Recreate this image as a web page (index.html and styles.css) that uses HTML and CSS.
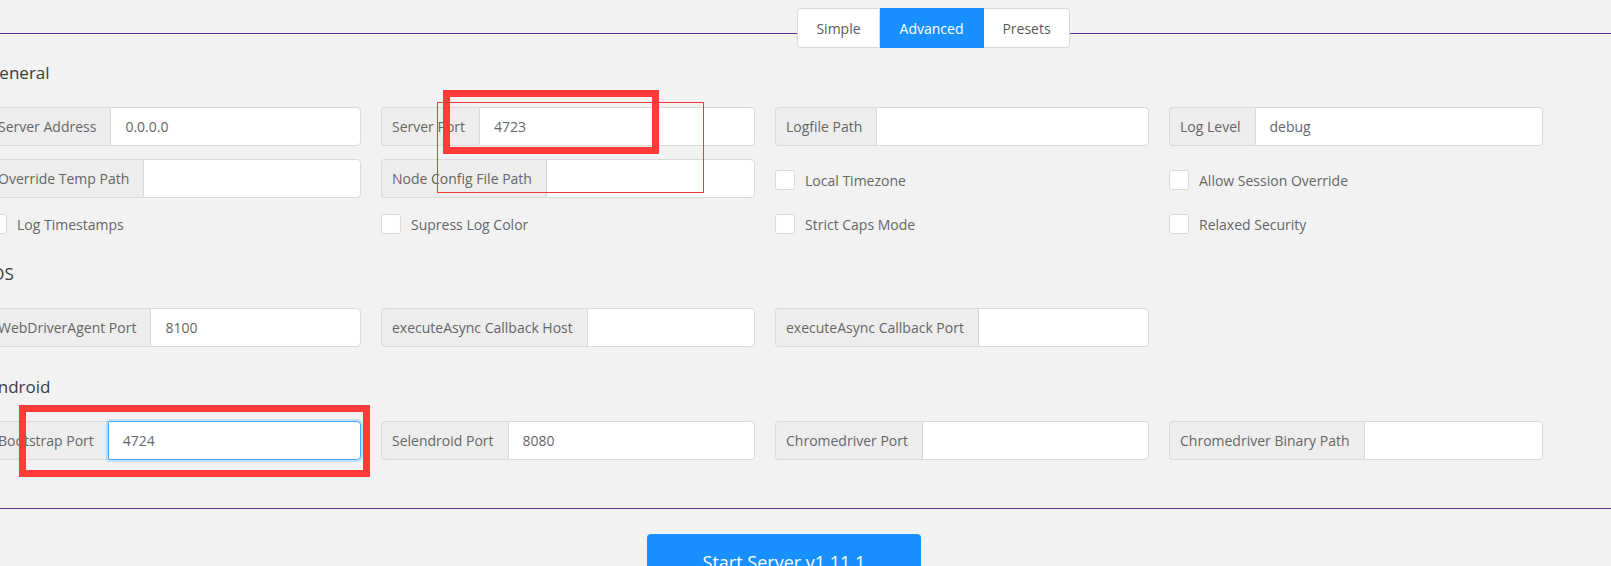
FILE: index.html
```html
<!DOCTYPE html>
<html lang="en">
<head>
<meta charset="utf-8">
<title>Server Settings</title>
<link rel="stylesheet" href="styles.css">
</head>
<body>
  <header class="topbar">
    <div class="tabs">
      <button class="tab tab-simple">Simple</button>
      <button class="tab tab-advanced is-active">Advanced</button>
      <button class="tab tab-presets">Presets</button>
    </div>
  </header>

  <main class="content">
    <section class="section">
      <h2 class="section-title">General</h2>
      <div class="grid">
        <div class="field"><span class="addon">Server Address</span><input class="input" value="0.0.0.0" readonly></div>
        <div class="field"><span class="addon">Server Port</span><input class="input" value="4723" readonly></div>
        <div class="field"><span class="addon">Logfile Path</span><input class="input" value="" readonly></div>
        <div class="field"><span class="addon">Log Level</span><input class="input" value="debug" readonly></div>

        <div class="field"><span class="addon">Override Temp Path</span><input class="input" value="" readonly></div>
        <div class="field"><span class="addon">Node Config File Path</span><input class="input" value="" readonly></div>
        <label class="check"><span class="box"></span>Local Timezone</label>
        <label class="check"><span class="box"></span>Allow Session Override</label>

        <label class="check"><span class="box"></span>Log Timestamps</label>
        <label class="check"><span class="box"></span>Supress Log Color</label>
        <label class="check"><span class="box"></span>Strict Caps Mode</label>
        <label class="check"><span class="box"></span>Relaxed Security</label>
      </div>
    </section>

    <section class="section">
      <h2 class="section-title">iOS</h2>
      <div class="grid">
        <div class="field"><span class="addon">WebDriverAgent Port</span><input class="input" value="8100" readonly></div>
        <div class="field"><span class="addon">executeAsync Callback Host</span><input class="input" value="" readonly></div>
        <div class="field"><span class="addon">executeAsync Callback Port</span><input class="input" value="" readonly></div>
      </div>
    </section>

    <section class="section">
      <h2 class="section-title">Android</h2>
      <div class="grid">
        <div class="field"><span class="addon">Bootstrap Port</span><input class="input is-focused" value="4724" readonly></div>
        <div class="field"><span class="addon">Selendroid Port</span><input class="input" value="8080" readonly></div>
        <div class="field"><span class="addon">Chromedriver Port</span><input class="input" value="" readonly></div>
        <div class="field"><span class="addon">Chromedriver Binary Path</span><input class="input" value="" readonly></div>
      </div>
    </section>
  </main>

  <div class="divider"></div>

  <div class="actions">
    <button class="start-btn">Start Server v1.11.1</button>
  </div>

  <div class="mark mark-thick mark-port"></div>
  <div class="mark mark-thin mark-node"></div>
  <div class="mark mark-thick mark-bootstrap"></div>
</body>
</html>
```

FILE: styles.css
```css
* {
  box-sizing: border-box;
}

html,
body {
  margin: 0;
  padding: 0;
}

body {
  position: relative;
  width: 1611px;
  height: 566px;
  overflow: hidden;
  background: #f2f2f2;
  font-family: "Open Sans", "Noto Sans", sans-serif;
  font-size: 14px;
  color: #666666;
}

/* ---------- top bar with segmented tabs ---------- */
.topbar {
  position: relative;
  height: 48px;
  padding-top: 8px;
}

.topbar::before {
  content: "";
  position: absolute;
  left: 0;
  right: 0;
  top: 33px;
  height: 1px;
  background: #662d91;
}

.tabs {
  position: relative;
  display: flex;
  width: max-content;
  margin-left: 797px;
}

.tab {
  height: 40px;
  padding: 0;
  margin: 0;
  background: #ffffff;
  border: 1px solid #d9d9d9;
  border-left: 0;
  font-family: "Open Sans", "Noto Sans", sans-serif;
  font-size: 14px;
  color: #5a5a5a;
  text-align: center;
  cursor: pointer;
}

.tab-simple {
  width: 83px;
  border-left: 1px solid #d9d9d9;
  border-radius: 4px 0 0 4px;
}

.tab-advanced {
  width: 104px;
}

.tab-presets {
  width: 86px;
  border-radius: 0 4px 4px 0;
}

.tab.is-active {
  background: #1890ff;
  border-color: #1890ff;
  color: #ffffff;
}

/* ---------- content ---------- */
.content {
  width: 1556px;
  margin-left: -13px;
  padding-top: 13px;
}

.section + .section {
  margin-top: 28px;
}

.section-title {
  margin: 0 0 22px;
  font-size: 17px;
  font-weight: 400;
  line-height: 24px;
  color: #3c3c3c;
}

.grid {
  display: grid;
  grid-template-columns: repeat(4, 374px);
  column-gap: 20px;
  row-gap: 13px;
}

.field {
  display: flex;
  height: 39px;
}

.addon {
  display: flex;
  align-items: center;
  flex: none;
  padding: 0 14px 0 10px;
  background: #ededed;
  border: 1px solid #d9d9d9;
  border-right: 0;
  border-radius: 4px 0 0 4px;
  white-space: nowrap;
  color: #666666;
}

.input {
  flex: 1;
  min-width: 0;
  height: 39px;
  margin: 0;
  padding: 0 14px;
  background: #ffffff;
  border: 1px solid #d9d9d9;
  border-radius: 0 4px 4px 0;
  font-family: "Open Sans", "Noto Sans", sans-serif;
  font-size: 14px;
  color: #666666;
  outline: none;
}

.input.is-focused {
  border-color: #40a9ff;
  border-radius: 2px 4px 4px 2px;
  box-shadow: 0 0 0 2px rgba(24, 144, 255, 0.2);
}

.check {
  display: flex;
  align-items: center;
  align-self: center;
  height: 20px;
  margin-top: 3px;
  color: #666666;
  white-space: nowrap;
}

.box {
  flex: none;
  width: 20px;
  height: 20px;
  margin-right: 10px;
  background: #ffffff;
  border: 1px solid #d9d9d9;
  border-radius: 3px;
}

/* ---------- bottom ---------- */
.divider {
  height: 1px;
  margin-top: 48px;
  background: #662d91;
}

.actions {
  display: flex;
  padding-top: 25px;
  padding-left: 647px;
}

.start-btn {
  width: 274px;
  height: 56px;
  flex: none;
  background: #1890ff;
  border: 0;
  border-radius: 4px;
  font-family: "Open Sans", "Noto Sans", sans-serif;
  font-size: 18px;
  color: #ffffff;
}

/* ---------- annotation marks drawn over the screenshot ---------- */
.mark {
  position: absolute;
  pointer-events: none;
}

.mark-thick {
  border: 7px solid #fe3a3a;
}

.mark-thin {
  border: 1px solid #e8393b;
}

.mark-port {
  left: 443px;
  top: 90px;
  width: 216px;
  height: 64px;
}

.mark-node {
  left: 437px;
  top: 102px;
  width: 267px;
  height: 91px;
}

.mark-bootstrap {
  left: 19px;
  top: 405px;
  width: 351px;
  height: 72px;
}
```
